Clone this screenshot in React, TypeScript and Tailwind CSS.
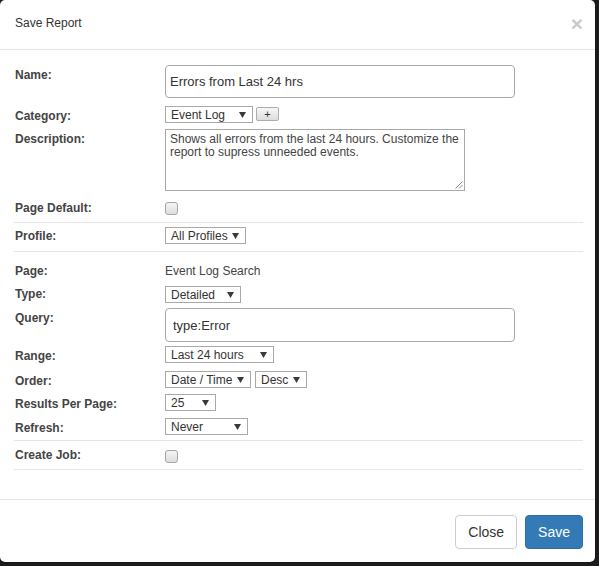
import React from "react";

const Tri = () => (
  <svg width="7" height="6" viewBox="0 0 7 6" className="shrink-0">
    <path d="M0 0 H7 L3.5 6 Z" fill="#3a3a3a" />
  </svg>
);

const Sel = ({ w, text }: { w: string; text: string }) => (
  <div
    className={`${w} h-[17px] border border-[#a9a9a9] bg-white flex items-center justify-between pl-[5px] pr-[6px] text-[12px] leading-[14px] text-[#333] shrink-0`}
  >
    <span>{text}</span>
    <Tri />
  </div>
);

const Label = ({ children, pt }: { children: React.ReactNode; pt: string }) => (
  <div className={`w-[150px] shrink-0 font-bold text-[#444] ${pt}`}>{children}</div>
);

const Check = ({ mt }: { mt: string }) => (
  <div
    className={`${mt} w-[13px] h-[13px] rounded-[3px] border border-[#a6a6a6] bg-gradient-to-b from-[#f4f4f4] to-[#dedede]`}
  />
);

const Divider = ({ mt }: { mt: string }) => (
  <div className={`${mt} -ml-px h-px bg-[#e5e5e5]`} />
);

export default function App() {
  return (
    <div
      className="w-[599px] h-[566px] bg-[#1c1c1c] overflow-hidden"
      style={{ fontFamily: '"Liberation Sans", Arial, sans-serif' }}
    >
      <div className="-ml-px -mt-px w-[597px] rounded-[6px] border border-black/20 bg-white bg-clip-padding overflow-hidden">
        {/* header */}
        <div className="h-[50px] border-b border-[#e5e5e5] pl-[15px] pr-[12px] flex justify-between">
          <div className="pt-[16px] text-[12px] leading-[14px] text-[#333]">Save Report</div>
          <div className="pt-[13px] text-[21px] font-bold leading-none text-[#c9c9c9]">×</div>
        </div>

        {/* body */}
        <div className="pl-[15px] pr-[12px] pt-[15px] pb-[29px] text-[12px] leading-[14px] text-[#333]">
          <div className="flex h-[33px]">
            <Label pt="pt-[3px]">Name:</Label>
            <div className="w-[350px] h-[33px] border border-[#a9a9a9] rounded-[4px] pl-[4px] flex items-center text-[13px] leading-[15px] text-[#333]">
              Errors from Last 24 hrs
            </div>
          </div>

          <div className="flex h-[17px] mt-[8px]">
            <Label pt="pt-[3px]">Category:</Label>
            <Sel w="w-[88px]" text="Event Log" />
            <div className="ml-[3px] mt-px w-[23px] h-[14px] border border-[#adadad] rounded-[2px] bg-gradient-to-b from-[#f7f7f7] to-[#dddddd] flex items-center justify-center text-[11px] leading-none text-[#333]">
              +
            </div>
          </div>

          <div className="flex h-[62px] mt-[6px]">
            <Label pt="pt-[3px]">Description:</Label>
            <div className="relative w-[300px] h-[62px] border border-[#a9a9a9] pl-[4px] pt-[3px] text-[12px] leading-[13px] text-[#444]">
              Shows all errors from the last 24 hours. Customize the
              <br />
              report to supress unneeded events.
              <svg width="9" height="9" viewBox="0 0 9 9" className="absolute right-[1px] bottom-[1px]">
                <path d="M8.5 1.5 L1.5 8.5 M8.5 5 L5 8.5" stroke="#8a8a8a" strokeWidth="1" />
              </svg>
            </div>
          </div>

          <div className="flex h-[14px] mt-[10px]">
            <Label pt="pt-0">Page Default:</Label>
            <Check mt="mt-[1px]" />
          </div>

          <Divider mt="mt-[7px]" />

          <div className="flex h-[17px] mt-[4px]">
            <Label pt="pt-[2px]">Profile:</Label>
            <Sel w="w-[81px]" text="All Profiles" />
          </div>

          <Divider mt="mt-[7px]" />

          <div className="flex h-[14px] mt-[12px]">
            <Label pt="pt-0">Page:</Label>
            <div className="text-[#444]">Event Log Search</div>
          </div>

          <div className="flex h-[17px] mt-[8px]">
            <Label pt="pt-[1px]">Type:</Label>
            <Sel w="w-[76px]" text="Detailed" />
          </div>

          <div className="flex h-[34px] mt-[5px]">
            <Label pt="pt-[3px]">Query:</Label>
            <div className="w-[350px] h-[34px] border border-[#a9a9a9] rounded-[4px] pl-[7px] flex items-center text-[13px] leading-[15px] text-[#333]">
              type:Error
            </div>
          </div>

          <div className="flex h-[17px] mt-[4px]">
            <Label pt="pt-[3px]">Range:</Label>
            <Sel w="w-[109px]" text="Last 24 hours" />
          </div>

          <div className="flex h-[17px] mt-[8px]">
            <Label pt="pt-[3px]">Order:</Label>
            <div className="flex gap-[4px]">
              <Sel w="w-[86px]" text="Date / Time" />
              <Sel w="w-[52px]" text="Desc" />
            </div>
          </div>

          <div className="flex h-[17px] mt-[6px]">
            <Label pt="pt-[3px]">Results Per Page:</Label>
            <Sel w="w-[51px]" text="25" />
          </div>

          <div className="flex h-[17px] mt-[7px]">
            <Label pt="pt-[3px]">Refresh:</Label>
            <Sel w="w-[83px]" text="Never" />
          </div>

          <Divider mt="mt-[5px]" />

          <div className="flex h-[14px] mt-[7px]">
            <Label pt="pt-0">Create Job:</Label>
            <Check mt="mt-[2px]" />
          </div>

          <Divider mt="mt-[7px]" />
        </div>

        {/* footer */}
        <div className="border-t border-[#e5e5e5] pt-[15px] pb-[13px] pr-[12px] flex justify-end gap-[8px]">
          <button className="h-[34px] px-[12px] border border-[#cccccc] rounded-[4px] bg-white text-[14px] text-[#333]">
            Close
          </button>
          <button className="h-[34px] px-[12px] border border-[#2e6da4] rounded-[4px] bg-[#337ab7] text-[14px] text-white">
            Save
          </button>
        </div>
      </div>
    </div>
  );
}
